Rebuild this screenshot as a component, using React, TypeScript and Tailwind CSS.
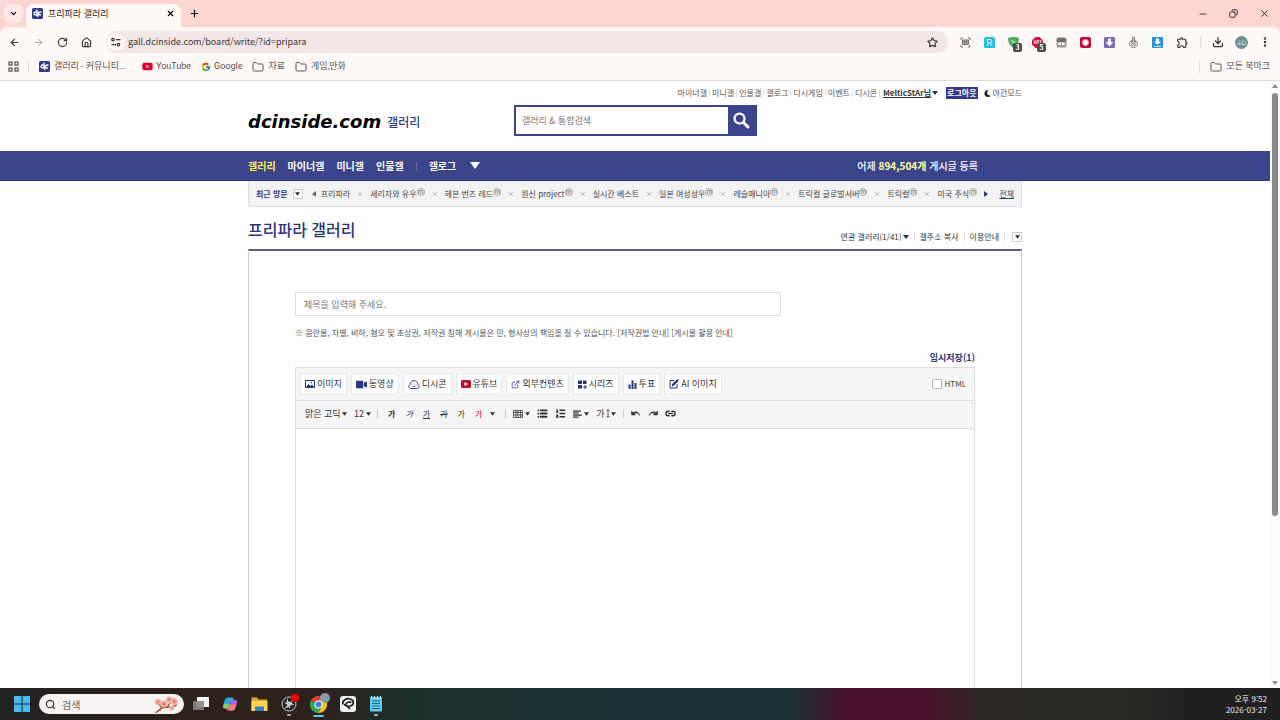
import {
  ArrowLeft,
  ArrowRight,
  ChevronDown,
  Copy,
  Download,
  ExternalLink,
  Folder,
  House,
  Link2,
  List,
  ListOrdered,
  Minus,
  MoreVertical,
  Plus,
  RotateCw,
  Search,
  Star,
  X,
} from "lucide-react";
import { FaMoon, FaVideo, FaYoutube } from "react-icons/fa";
import { FcGoogle } from "react-icons/fc";
import { MdOutlineExtension } from "react-icons/md";

const utilLinks = ["마이너갤", "미니갤", "인물갤", "갤로그", "디시게임", "이벤트", "디시콘"];

const recent = [
  { name: "프리파라", minor: false },
  { name: "세리자와 유우", minor: true },
  { name: "헤븐 번즈 레드", minor: true },
  { name: "원신 project", minor: true },
  { name: "실시간 베스트", minor: false },
  { name: "일본 여성성우", minor: true },
  { name: "레슬매니아", minor: true },
  { name: "트릭컬 글로벌서버", minor: true },
  { name: "트릭컬", minor: true },
  { name: "미국 주식", minor: true },
];

function Caret({ className = "" }: { className?: string }) {
  return (
    <svg className={`shrink-0 ${className}`} width="6" height="4" viewBox="0 0 6 4" fill="currentColor">
      <path d="M0 0h6L3 4z" />
    </svg>
  );
}

function DcIcon() {
  return (
    <svg width="11" height="11" viewBox="0 0 22 22" className="shrink-0">
      <rect width="22" height="22" rx="3" fill="#34398a" />
      <path d="M10 3v11H7a3 3 0 0 1 0-6h3M19 8h-3a3 3 0 0 0 0 6h2M13 9l-2 9" fill="none" stroke="#fff" strokeWidth="2.600" />
    </svg>
  );
}

function TabStrip() {
  return (
    <div className="flex h-[27px] items-end bg-[#fbd5cf]">
      <button aria-label="탭 검색" className="mb-1 ml-1 flex h-[19px] w-[19px] items-center justify-center rounded-md bg-[#fdeae6]">
        <ChevronDown size={9} strokeWidth={3} />
      </button>
      <div className="ml-[3px] flex h-[23px] w-[155px] items-center rounded-t-lg bg-[#fef8f6] pb-1 pl-[6px] pr-[6px]">
        <DcIcon />
        <span className="ml-[5px] flex-1 text-[9px] text-[#2b2524]">프리파라 갤러리</span>
        <button aria-label="탭 닫기"><X size={9} strokeWidth={3} /></button>
      </div>
      <button aria-label="새 탭" className="mb-2 ml-2"><Plus size={11} strokeWidth={2.5} /></button>
      <div className="mb-2 ml-auto flex items-center gap-[21px] pr-[10px] text-[#2b2524]">
        <button aria-label="최소화"><Minus size={10} /></button>
        <button aria-label="이전 크기로"><Copy size={9} strokeWidth={2.5} className="-scale-x-100" /></button>
        <button aria-label="닫기"><X size={11} /></button>
      </div>
    </div>
  );
}

function Extensions() {
  return (
    <div className="flex items-center gap-[13px]">
      <svg width="11" height="11" viewBox="0 0 22 22" fill="none" stroke="#75706f" strokeWidth="2">
        <path d="M2 6V2h4M16 2h4v4M20 16v4h-4M6 20H2v-4" />
        <path d="M5 6h12v9H5zM7 9h8M7 12h8" fill="#b8b4b3" />
      </svg>
      <svg width="11" height="11" viewBox="0 0 22 22">
        <rect width="22" height="22" rx="3" fill="#22bde0" />
        <path d="M7 18V5h5a3.500 3.500 0 0 1 0 7H7M11 12l5 6" fill="none" stroke="#fff" strokeWidth="2" />
      </svg>
      <div className="relative">
        <svg width="11" height="11" viewBox="0 0 22 22">
          <path d="M0 2q11-4 22 0c0 10-4 16-11 20C4 18 0 12 0 2z" fill="#54ab63" />
          <path d="M6 7l10 6" stroke="#a8d8b0" strokeWidth="3" />
        </svg>
        <span className="absolute -bottom-1 -right-[3px] flex h-[9px] w-[9px] items-center justify-center rounded-xs bg-[#4a4a4a] text-[7px] font-bold text-white">3</span>
      </div>
      <div className="relative">
        <svg width="11" height="11" viewBox="0 0 22 22">
          <path d="M7 0h8l7 7v8l-7 7H7l-7-7V7z" fill="#cf1740" />
          <path d="M4 14l2-7 2 7M10 14V7h3v7h-3M15 7h3l-2 7" stroke="#fff" strokeWidth="1.500" fill="none" />
        </svg>
        <span className="absolute -bottom-1 -right-[3px] flex h-[9px] w-[9px] items-center justify-center rounded-xs bg-[#4a4a4a] text-[7px] font-bold text-white">5</span>
      </div>
      <svg width="11" height="11" viewBox="0 0 22 22">
        <path d="M5 1h12q3 0 4 4v5H1V5q1-4 4-4z" fill="#77716f" />
        <path d="M1 10h20v8q0 3-3 3H4q-3 0-3-3z" fill="#a09b99" />
        <path d="M5 11h5v5H5zM12 11h5v5h-5z" fill="#fff" />
      </svg>
      <svg width="11" height="11" viewBox="0 0 22 22">
        <rect width="22" height="22" rx="4" fill="#c70b37" />
        <circle cx="11" cy="11" r="6" fill="#fff" stroke="#f8a4b8" strokeWidth="2" />
      </svg>
      <svg width="11" height="11" viewBox="0 0 22 22">
        <rect width="22" height="22" rx="3" fill="#7a65b5" />
        <path d="M8 3h6v7h5l-8 9-8-9h5z" fill="#fff" />
      </svg>
      <svg width="11" height="11" viewBox="0 0 22 22" fill="none" stroke="#8b8685" strokeWidth="2">
        <path d="M8 6a8 8 0 1 0 6 0" />
        <path d="M6 13a5 5 0 0 0 10 0" />
        <path d="M9 0h4v9h3l-5 6-5-6h3z" fill="#c4c0be" />
      </svg>
      <svg width="11" height="11" viewBox="0 0 22 22">
        <rect width="22" height="22" fill="#2793df" />
        <path d="M8 3h6v6h4l-7 7-7-7h4zM4 18h14v2H4z" fill="#fff" />
      </svg>
      <MdOutlineExtension size={13} className="text-[#3b3534]" />
    </div>
  );
}

function Toolbar() {
  return (
    <div className="flex h-[30px] items-center rounded-t-lg bg-[#fef8f6] text-[#3b3534]">
      <div className="flex items-center gap-[13px] pl-[9px]">
        <button aria-label="뒤로"><ArrowLeft size={11} strokeWidth={2.5} /></button>
        <button aria-label="앞으로" className="text-[#a39c9a]"><ArrowRight size={11} /></button>
        <button aria-label="새로고침"><RotateCw size={11} strokeWidth={2.5} /></button>
        <button aria-label="홈"><House size={11} strokeWidth={2.5} /></button>
      </div>
      <div className="ml-[14px] flex h-[22px] flex-1 items-center rounded-full bg-[#f3e6e7] pl-px pr-[10px]">
        <span className="flex h-[18px] w-[18px] items-center justify-center rounded-full bg-[#fef8f6]">
          <svg width="10" height="10" viewBox="0 0 20 20" fill="none" stroke="currentColor" strokeWidth="2.500">
            <circle cx="4" cy="5" r="2.500" />
            <path d="M10 5h9M1 15h9" />
            <circle cx="15" cy="15" r="2.500" />
          </svg>
        </span>
        <input
          aria-label="주소창"
          readOnly
          value="gall.dcinside.com/board/write/?id=pripara"
          className="flex-1 bg-transparent pl-[3px] text-[9px] outline-none"
        />
        <button aria-label="북마크 추가"><Star size={11} strokeWidth={2.5} /></button>
      </div>
      <div className="ml-3"><Extensions /></div>
      <span className="mx-[11px] h-3 w-px bg-[#f3d3ce]" />
      <div className="flex items-center gap-[11px] pr-[9px]">
        <button aria-label="다운로드"><Download size={12} strokeWidth={2.5} /></button>
        <span className="flex h-[13px] w-[13px] items-center justify-center rounded-full bg-[#748d99] text-[5px] text-white">ふに</span>
        <button aria-label="메뉴"><MoreVertical size={12} strokeWidth={3} /></button>
      </div>
    </div>
  );
}

function Bookmarks() {
  return (
    <div className="flex h-6 items-center border-b border-[#e5dcda] bg-[#fef8f6] pb-[4px] font-[Roboto,'Noto_Sans_CJK_KR',sans-serif] text-[9px] text-[#5a5352]">
      <button aria-label="앱" className="ml-2">
        <svg width="11" height="11" viewBox="0 0 22 22" fill="none" stroke="currentColor" strokeWidth="2.500">
          <path d="M2 2h6v6H2zM14 2h6v6h-6zM2 14h6v6H2zM14 14h6v6h-6z" />
        </svg>
      </button>
      <span className="ml-[9px] h-3 w-px bg-[#f3d3ce]" />
      <a href="#" className="ml-[10px] flex items-center gap-1"><DcIcon />갤러리 - 커뮤니티...</a>
      <a href="#" className="ml-4 flex items-center gap-[3px]"><FaYoutube size={11} className="text-[#e00030]" />YouTube</a>
      <a href="#" className="ml-[10px] flex items-center gap-[3px]"><FcGoogle size={10} />Google</a>
      <a href="#" className="ml-[10px] flex items-center gap-1"><Folder size={12} />자료</a>
      <a href="#" className="ml-[10px] flex items-center gap-1"><Folder size={12} />게임,만화</a>
      <span className="ml-auto h-3 w-px bg-[#f3d3ce]" />
      <a href="#" className="ml-[10px] mr-[10px] flex items-center gap-1"><Folder size={12} />모든 북마크</a>
    </div>
  );
}

function SiteHeader() {
  return (
    <header className="mx-auto w-[774px] pt-[6px]">
      <div className="flex h-3 items-center justify-end text-[8px] text-[#555]">
        {utilLinks.map((t) => (
          <a key={t} href="#" className="mr-[2px] flex items-center gap-[2px] leading-3">
            {t}
            <span className="h-[7px] w-px bg-[#ddd]" />
          </a>
        ))}
        <button className="ml-px flex items-center gap-px font-bold text-[#333]">
          <span className="underline">MelticStAr님</span>
          <Caret />
        </button>
        <button className="ml-2 h-3 bg-[#34398a] px-px font-bold leading-3 text-white">로그아웃</button>
        <button className="ml-[6px] flex items-center gap-[2px]">
          <FaMoon size={7} className="text-[#222]" />
          야간모드
        </button>
      </div>
      <div className="mt-[6px] flex h-[31px] items-center">
        <h1 className="flex w-[266px] items-center pt-[3px]">
          <a href="#" className="font-['DejaVu_Sans'] text-[18px] font-bold italic leading-5 text-black">dcinside.com</a>
          <a href="#" className="ml-[6px] text-[12px] font-medium text-[#34398a]">갤러리</a>
        </h1>
        <form className="flex h-[31px] w-[243px] bg-[#3c448c] p-[2px]">
          <input
            aria-label="갤러리 & 통합검색"
            placeholder="갤러리 & 통합검색"
            className="w-[212px] bg-white pl-[6px] text-[9px] outline-none placeholder:text-[#777]"
          />
          <button type="button" aria-label="검색" className="flex flex-1 items-center justify-center pb-px text-white">
            <svg width="17" height="17" viewBox="0 0 34 34" fill="none" stroke="currentColor">
              <circle cx="13" cy="13" r="10" strokeWidth="4.500" />
              <path d="M21 21l9 9" strokeWidth="6" strokeLinecap="round" />
            </svg>
          </button>
        </form>
      </div>
    </header>
  );
}

function MainNav() {
  return (
    <nav className="mt-[15px] h-[30px] border-b border-[#29367c] bg-[#3c448c] text-[10px] font-bold text-white">
      <div className="mx-auto flex h-full w-[774px] items-center">
        <a href="#" className="text-[#fff34d]">갤러리</a>
        <a href="#" className="ml-3">마이너갤</a>
        <a href="#" className="ml-3">미니갤</a>
        <a href="#" className="ml-3">인물갤</a>
        <span className="mx-3 h-2 w-px bg-[#5a65a5]" />
        <a href="#">갤로그</a>
        <button aria-label="더보기" className="ml-[14px]">
          <svg width="10" height="7" viewBox="0 0 10 7" fill="currentColor"><path d="M0 0h10L5 7z" /></svg>
        </button>
        <p className="ml-auto mr-11 font-medium">
          어제 <strong className="text-[#ffffa0]">894,504개</strong> 게시글 등록
        </p>
      </div>
    </nav>
  );
}

function RecentBar() {
  return (
    <div className="mx-auto flex h-[26px] w-[774px] items-center border border-t-0 border-[#ddd] bg-[#f3f3f3] pl-[7px] pr-[7px] text-[8px] text-[#444]">
      <strong className="whitespace-nowrap text-[#34398a]">최근 방문</strong>
      <button aria-label="최근 방문 펼치기" className="ml-[5px] flex h-[10px] w-[10px] items-center justify-center border border-[#ccc] bg-white text-[#333]">
        <Caret className="w-[5px]" />
      </button>
      <button aria-label="이전" className="ml-[9px]">
        <svg width="4" height="6" viewBox="0 0 4 6" fill="#666"><path d="M4 0v6L0 3z" /></svg>
      </button>
      <ul className="ml-[5px] flex flex-1 items-center justify-between whitespace-nowrap">
        {recent.map((r, i) => (
          <li key={r.name} className="contents">
            <a href="#" className="flex items-center">
              {r.name}
              {r.minor && (
                <span className="mb-[3px] flex h-2 w-2 items-center justify-center rounded-full border border-[#aaa] text-[6px] leading-none text-[#666]">m</span>
              )}
            </a>
            {i < recent.length - 1 && (
              <button aria-label={`${r.name} 삭제`} className="text-[#aaa]"><X size={6} strokeWidth={3} /></button>
            )}
          </li>
        ))}
      </ul>
      <button aria-label="다음" className="ml-[7px]">
        <svg width="4" height="6" viewBox="0 0 4 6" fill="#29367c"><path d="M0 0v6l4-3z" /></svg>
      </button>
      <a href="#" className="ml-[11px] text-[#34398a] underline">전체</a>
    </div>
  );
}

function ToolButton({ icon, label }: { icon: React.ReactNode; label: string }) {
  return (
    <button className="flex h-[22px] items-center gap-[2px] whitespace-nowrap rounded-xs border border-[#e8e8e8] bg-white px-1 text-[9px] text-[#333]">
      <span className="text-[#29367c]">{icon}</span>
      {label}
    </button>
  );
}

function Sep() {
  return <span className="h-[9px] w-px bg-[#ccc]" />;
}

function Editor() {
  return (
    <div className="flex flex-1 flex-col border border-b-0 border-[#ddd]">
      <div className="flex h-[33px] shrink-0 items-center gap-1 border-b border-[#ddd] bg-[#f5f5f5] pl-1 pr-2">
        <ToolButton
          label="이미지"
          icon={
            <svg width="10" height="8" viewBox="0 0 20 16">
              <path d="M1 1h18v14H1z" fill="none" stroke="currentColor" strokeWidth="2" />
              <path d="M2 14l5-6 4 4 3-3 4 5z" fill="currentColor" />
              <circle cx="13" cy="5" r="1.500" fill="currentColor" />
            </svg>
          }
        />
        <ToolButton label="동영상" icon={<FaVideo size={11} />} />
        <ToolButton
          label="디시콘"
          icon={
            <svg width="12" height="9" viewBox="0 0 24 18" fill="none" stroke="currentColor" strokeWidth="1.800">
              <path d="M6 17C1 17 0 11 4 9c1-5 3-7 8-8 5 1 7 3 8 8 4 2 3 8-2 8z" />
              <path d="M8 9v2M16 9v2M10 13h4" />
            </svg>
          }
        />
        <ToolButton
          label="유튜브"
          icon={
            <svg width="10" height="8" viewBox="0 0 20 16">
              <rect width="20" height="16" rx="3" fill="#b4122f" />
              <path d="M7 4v8l7-4z" fill="#fff" />
            </svg>
          }
        />
        <ToolButton label="외부컨텐츠" icon={<ExternalLink size={9} />} />
        <ToolButton
          label="시리즈"
          icon={
            <svg width="9" height="9" viewBox="0 0 18 18" fill="currentColor">
              <path d="M0 1h8v7H0zM10 1h7v7h-7zM0 10h8v7H0zM13 10h2v3h3v2h-3v3h-2v-3h-3v-2h3z" />
            </svg>
          }
        />
        <ToolButton
          label="투표"
          icon={
            <svg width="9" height="9" viewBox="0 0 18 18" fill="currentColor">
              <path d="M1 9h4v9H1zM7 1h4v17H7zM13 6h4v12h-4z" />
            </svg>
          }
        />
        <ToolButton
          label="AI 이미지"
          icon={
            <svg width="10" height="10" viewBox="0 0 20 20" fill="none" stroke="currentColor" strokeWidth="2">
              <path d="M10 3H2v15h14v-8" />
              <path d="M6 14l2-5 8-7 2 2-8 8zM18 0v4" fill="currentColor" />
            </svg>
          }
        />
        <label className="ml-auto flex items-center gap-[3px] text-[8px] text-[#444]">
          <input type="checkbox" className="h-[10px] w-[10px] appearance-none border border-[#bbb] bg-white" />
          HTML
        </label>
      </div>
      <div className="flex h-7 shrink-0 items-center border-b border-[#ddd] bg-[#f5f5f5] pb-[2px] pl-[9px] text-[9px] text-[#333]">
        <select aria-label="글꼴" className="appearance-none bg-transparent"><option>맑은 고딕</option></select>
        <Caret className="ml-px w-[5px]" />
        <select aria-label="글자 크기" className="ml-[7px] appearance-none bg-transparent"><option>12</option></select>
        <Caret className="ml-[2px] w-[5px]" />
        <div className="ml-[6px] flex items-center gap-[10px] text-[8px]">
          <Sep />
          <button aria-label="굵게" className="font-bold">가</button>
          <button aria-label="기울임" className="italic">가</button>
          <button aria-label="밑줄" className="underline">가</button>
          <button aria-label="취소선" className="line-through">가</button>
          <button aria-label="글자 배경색">가</button>
          <button aria-label="글자색" className="flex items-center gap-2 text-[#d0103a]">
            가<Caret className="w-[5px] text-[#333]" />
          </button>
          <Sep />
        </div>
        <div className="ml-[7px] flex items-center gap-[7px]">
          <button aria-label="표" className="flex items-center gap-[2px]">
            <svg width="10" height="8" viewBox="0 0 20 16" fill="none" stroke="currentColor" strokeWidth="1.500">
              <path d="M1 1h18v14H1zM1 5h18M1 10h18M6 1v14M10 1v14M15 1v14" />
            </svg>
            <Caret className="w-[5px]" />
          </button>
          <button aria-label="글머리 기호"><List size={11} strokeWidth={4} /></button>
          <button aria-label="번호 매기기"><ListOrdered size={11} strokeWidth={3} /></button>
          <button aria-label="정렬" className="flex items-center gap-[2px]">
            <svg width="9" height="8" viewBox="0 0 18 16" stroke="currentColor" strokeWidth="2.500">
              <path d="M0 2h16M0 6h11M0 10h18M0 14h11" />
            </svg>
            <Caret className="w-[5px]" />
          </button>
          <button aria-label="줄 간격" className="flex items-center gap-px">
            가
            <svg width="4" height="9" viewBox="0 0 8 18" fill="none" stroke="currentColor" strokeWidth="1.500">
              <path d="M4 2v14M1 4l3-3 3 3M1 14l3 3 3-3" />
            </svg>
            <Caret className="w-[5px]" />
          </button>
          <Sep />
          <button aria-label="실행 취소">
            <svg width="10" height="7" viewBox="0 0 20 14"><path d="M1 2v8h8L6 7q7-4 12 4Q14 0 4 5z" fill="currentColor" stroke="currentColor" /></svg>
          </button>
          <button aria-label="다시 실행">
            <svg width="10" height="7" viewBox="0 0 20 14"><path d="M19 2v8h-8l3-3Q7 3 2 11 6 0 16 5z" fill="currentColor" stroke="currentColor" /></svg>
          </button>
          <button aria-label="링크"><Link2 size={11} strokeWidth={3} /></button>
        </div>
      </div>
      <textarea aria-label="본문" className="w-full flex-1 resize-none bg-white outline-none" />
    </div>
  );
}

function Gallery() {
  return (
    <main className="mx-auto flex min-h-0 w-[774px] flex-1 flex-col">
      <div className="flex h-[42px] justify-between">
        <h2 className="mt-[10px] text-[16px] font-medium leading-6 text-[#29367c]">
          <a href="#">프리파라 갤러리</a>
        </h2>
        <div className="mt-6 flex h-3 items-center gap-[5px] text-[8px] text-[#333]">
          <button className="flex items-center gap-px">연관 갤러리(1/41)<Caret /></button>
          <span className="h-2 w-px bg-[#ddd]" />
          <button>갤주소 복사</button>
          <span className="h-2 w-px bg-[#ddd]" />
          <a href="#">이용안내</a>
          <span className="h-2 w-px bg-[#ddd]" />
          <button aria-label="펼치기" className="ml-[2px] flex h-[10px] w-[10px] items-center justify-center border border-[#ccc]">
            <Caret className="w-[5px]" />
          </button>
        </div>
      </div>
      <div className="flex min-h-0 flex-1 flex-col border-x border-t-2 border-x-[#ccc] border-t-[#5f5a8c] px-[46px] pt-[41px]">
        <input
          aria-label="제목"
          placeholder="제목을 입력해 주세요."
          className="h-6 w-[486px] shrink-0 border border-[#ddd] px-2 text-[9px] outline-none placeholder:text-[#777]"
        />
        <p className="mt-[10px] text-[8px] leading-[14px] text-[#555]">
          ※ 음란물, 차별, 비하, 혐오 및 초상권, 저작권 침해 게시물은 민, 형사상의 책임을 질 수 있습니다. <a href="#">[저작권법 안내]</a> <a href="#">[게시물 활용 안내]</a>
        </p>
        <button className="mb-[2px] mt-[11px] self-end text-[9px] font-bold leading-[14px] text-[#29367c]">임시저장(1)</button>
        <Editor />
      </div>
    </main>
  );
}

function Scrollbar() {
  return (
    <div className="flex w-[10px] shrink-0 flex-col items-center bg-[#fcfcfc] py-[3px] text-[#8b8b8b]">
      <Caret className="rotate-180" />
      <div className="mt-[5px] h-[423px] w-[6px] rounded-full bg-current" />
      <Caret className="mt-auto" />
    </div>
  );
}

function Taskbar() {
  return (
    <footer className="flex h-8 shrink-0 items-center bg-[linear-gradient(90deg,#222_0%,#2e201b_14%,#2c211c_25%,#1c302b_32%,#1b3034_47%,#1b3034_62%,#48102a_66%,#48102a_72%,#2b2825_77%,#292824_88%,#202020_93%)] pl-[14px] text-[#eee]">
      <button aria-label="시작">
        <svg width="16" height="16" viewBox="0 0 16 16" fill="#45bdf0">
          <path d="M0 0h7.500v7.500H0zM8.500 0H16v7.500H8.500zM0 8.500h7.500V16H0zM8.500 8.500H16V16H8.500z" />
        </svg>
      </button>
      <label className="ml-[9px] flex h-5 w-[145px] items-center rounded-full bg-[#f5f2f1] pl-[6px] pr-[5px] text-[#333]">
        <Search size={11} strokeWidth={2.5} />
        <input aria-label="검색" placeholder="검색" className="ml-[6px] w-0 flex-1 bg-transparent text-[10px] outline-none placeholder:text-[#666]" />
        <svg width="26" height="18" viewBox="0 0 52 36">
          <path d="M5 35c6-1 6-6 13-9 8-3 18 1 30-6M18 26l-6-8M28 25l6-9" fill="none" stroke="#8c4a32" strokeWidth="2.500" />
          <g fill="#efac9e">
            <circle cx="10" cy="14" r="6" />
            <circle cx="22" cy="18" r="7" />
            <circle cx="32" cy="9" r="6" />
            <circle cx="42" cy="13" r="7" />
            <circle cx="37" cy="26" r="5" />
          </g>
          <g fill="#c7453d">
            <circle cx="10" cy="14" r="1.500" />
            <circle cx="22" cy="18" r="2" />
            <circle cx="32" cy="9" r="1.500" />
            <circle cx="42" cy="13" r="2" />
            <circle cx="14" cy="30" r="2" />
          </g>
        </svg>
      </label>
      <div className="ml-[9px] flex items-center gap-[13px]">
        <svg width="16" height="16" viewBox="0 0 16 16">
          <path d="M4 1h12v10H4z" fill="#f4f4f4" />
          <path d="M0 5h11v9H0z" fill="#8a8583" opacity=".9" />
        </svg>
        <svg width="16" height="16" viewBox="0 0 32 32">
          <path d="M11 3h9q3 0 4 4l1 5h-7l-6 13H6q-6 0-4-6l4-12q1-4 5-4z" fill="#2aa5e0" />
          <path d="M6 15l-4 5q0 5 5 5h6l3-8z" fill="#8fce58" />
          <path d="M21 29h-9q-3 0-4-4l5 0 6-17h7q6 0 4 6l-4 11q-1 4-5 4z" fill="#b45be0" />
          <path d="M14 24l3-7h12l-3 8q-1 4-5 4h-9z" fill="#f2806a" />
        </svg>
        <svg width="17" height="16" viewBox="0 0 34 32">
          <path d="M1 3h11l3 4h17v23H1z" fill="#e6a91f" />
          <path d="M1 10h32v20H1z" fill="#ffd35a" />
          <path d="M8 21h18v9H8z" fill="#2b82c4" />
        </svg>
        <div className="relative">
          <svg width="16" height="16" viewBox="0 0 32 32">
            <circle cx="16" cy="16" r="14" fill="#222" stroke="#ccc" strokeWidth="2" />
            <g fill="#d2d2d2">
              <path d="M14 5a6 6 0 0 0 3 11 6 6 0 0 0 5-7 6 6 0 0 1-6 3 6 6 0 0 1-2-7z" />
              <path d="M14 5a6 6 0 0 0 3 11 6 6 0 0 0 5-7 6 6 0 0 1-6 3 6 6 0 0 1-2-7z" transform="rotate(120 16 16)" />
              <path d="M14 5a6 6 0 0 0 3 11 6 6 0 0 0 5-7 6 6 0 0 1-6 3 6 6 0 0 1-2-7z" transform="rotate(240 16 16)" />
            </g>
          </svg>
          <span className="absolute -right-[2px] -top-[2px] h-2 w-2 rounded-full bg-[#f00000]" />
          <span className="absolute -bottom-1 left-[6px] h-[2px] w-1 rounded-full bg-[#aaa]" />
        </div>
        <div className="relative">
          <svg width="17" height="17" viewBox="0 0 34 34">
            <path d="M17 17L2 9a17 17 0 0 1 30 0z" fill="#e34133" />
            <path d="M17 17L2 9a17 17 0 0 0 14 25l8-14z" fill="#32a853" />
            <path d="M17 9h15a17 17 0 0 1-16 25l8-13z" fill="#fbc116" />
            <circle cx="17" cy="17" r="8" fill="#fff" />
            <circle cx="17" cy="17" r="6" fill="#3f7de8" />
          </svg>
          <span className="absolute -right-[3px] -top-[3px] h-[10px] w-[10px] rounded-full bg-[#849ba4]" />
          <span className="absolute -bottom-1 left-[3px] h-[2px] w-[11px] rounded-full bg-[#62c5ef]" />
        </div>
        <svg width="16" height="16" viewBox="0 0 32 32">
          <rect width="32" height="32" rx="6" fill="#f0f0f0" />
          <path d="M6 17C3 8 14 4 21 6c8 3 7 12 0 14-5 2-11 0-9-4 2-5 9-5 10-2M8 17c6 0 8 5 12 9" fill="none" stroke="#222" strokeWidth="3.500" />
        </svg>
        <div className="relative">
          <svg width="14" height="16" viewBox="0 0 28 32">
            <rect x="2" y="2" width="24" height="29" rx="2" fill="#62cdea" />
            <path d="M6 10h16M6 15h16M6 20h16M6 25h16" stroke="#17668c" strokeWidth="2" />
            <path d="M5 0v5M11 0v5M17 0v5M23 0v5" stroke="#e8f8fd" strokeWidth="2" />
          </svg>
          <span className="absolute -bottom-1 left-[5px] h-[2px] w-1 rounded-full bg-[#aaa]" />
        </div>
      </div>
      <div className="ml-auto mr-[13px] text-right text-[8px] leading-[11px]">
        <p>오후 9:52</p>
        <p>2026-03-27</p>
      </div>
    </footer>
  );
}

export default function App() {
  return (
    <div lang="ko" className="flex h-screen flex-col overflow-hidden bg-white font-['Noto_Sans_CJK_KR',sans-serif]">
      <div className="bg-[#fbd5cf]">
        <TabStrip />
        <Toolbar />
        <Bookmarks />
      </div>
      <div className="flex min-h-0 flex-1">
        <div className="flex min-w-0 flex-1 flex-col">
          <SiteHeader />
          <MainNav />
          <RecentBar />
          <Gallery />
        </div>
        <Scrollbar />
      </div>
      <Taskbar />
    </div>
  );
}
